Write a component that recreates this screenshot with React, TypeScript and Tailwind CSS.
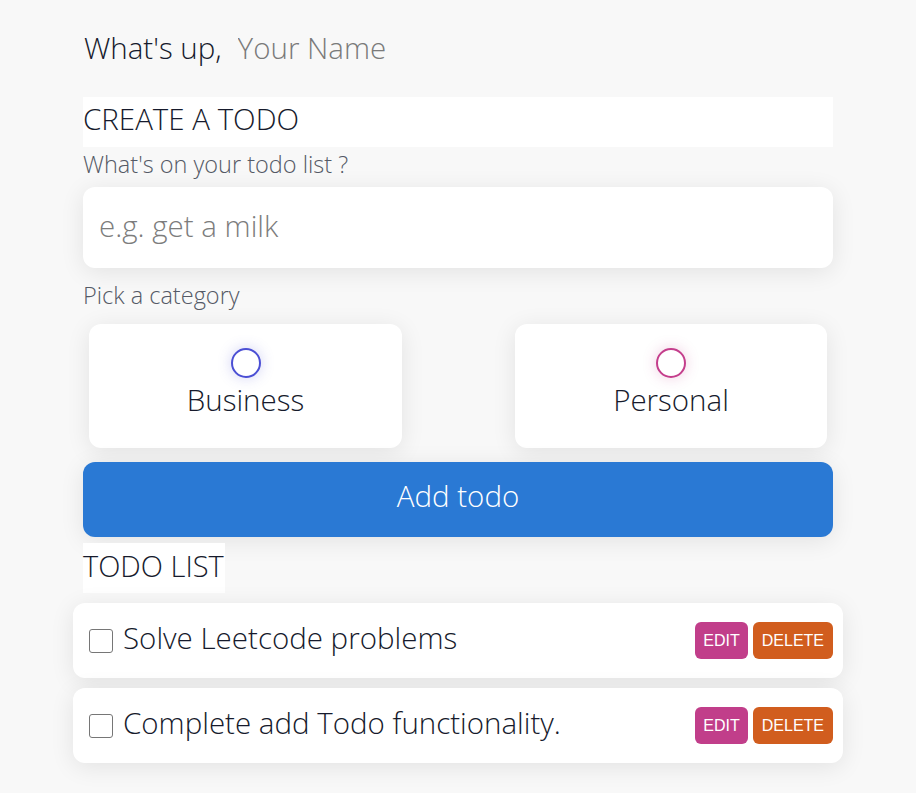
import React, { useState } from "react";

interface Todo {
  id: number;
  content: string;
  category: "business" | "personal";
  done: boolean;
}

const font = "font-['Open_Sans',sans-serif]";

const App: React.FC = () => {
  const [name, setName] = useState("");
  const [input, setInput] = useState("");
  const [category, setCategory] = useState<"business" | "personal" | "">("");
  const [todos, setTodos] = useState<Todo[]>([
    { id: 1, content: "Solve Leetcode problems", category: "business", done: false },
    { id: 2, content: "Complete add Todo functionality.", category: "personal", done: false },
  ]);

  // add new todo
  const handleAdd = () => {
    if (!input.trim() || !category) return;
    setTodos((prev) => [
      ...prev,
      { id: Date.now(), content: input, category, done: false },
    ]);
    setInput("");
    setCategory("");
  };

  const toggleDone = (id: number) => {
    setTodos((prev) =>
      prev.map((t) => (t.id === id ? { ...t, done: !t.done } : t))
    );
  };

  const removeTodo = (id: number) => {
    setTodos((prev) => prev.filter((t) => t.id !== id));
  };

  return (
    <div className={`${font} bg-[#f8f8f8] text-[#161a2c] font-light pt-[30px] pb-[30px]`}>
      <div className="w-[750px] mx-auto">
        {/* greeting */}
        <div className="flex items-center h-[40px] text-[29.5px] pb-[3px]">
          <span className="pl-[1px]">What's up,</span>
          <input
            type="text"
            value={name}
            onChange={(e) => setName(e.target.value)}
            placeholder="Your Name"
            className="ml-[16px] bg-transparent outline-none font-light placeholder:text-[#7a7a7a] text-[29.5px] w-[400px]"
          />
        </div>

        {/* create */}
        <h3 className="mt-[27px] bg-white h-[50px] flex items-center text-[29.5px] font-light leading-none pb-[6px]">
          CREATE A TODO
        </h3>
        <p className="mt-[6px] text-[23.5px] text-[#555a66] h-[25px] leading-[22px]">
          What's on your todo list ?
        </p>
        <input
          type="text"
          value={input}
          onChange={(e) => setInput(e.target.value)}
          placeholder="e.g. get a milk"
          className="mt-[9px] w-full h-[81px] bg-white rounded-[12px] px-[16px] pb-[5px] text-[29.5px] font-light outline-none placeholder:text-[#7c7c7c] shadow-[0_4px_24px_rgba(0,0,0,0.09)]"
        />
        <p className="mt-[16px] text-[23.5px] text-[#555a66] h-[25px] leading-[22px]">
          Pick a category
        </p>

        <div className="mt-[15px] flex justify-between px-[6px]">
          <label
            className="w-[313px] h-[124px] pb-[7px] bg-white rounded-[12px] flex flex-col items-center justify-center cursor-pointer shadow-[0_4px_24px_rgba(0,0,0,0.09)]"
            onClick={() => setCategory("business")}
          >
            <span
              className={`w-[30px] h-[30px] rounded-full border-2 border-[#4b4fd4] shadow-[0_0_14px_rgba(75,79,212,0.25)] ${
                category === "business" ? "bg-[#4b4fd4]" : "bg-white"
              }`}
            />
            <span className="mt-[4px] text-[29.5px] leading-[36px] font-light">
              Business
            </span>
          </label>
          <label
            className="w-[312px] h-[124px] pb-[7px] bg-white rounded-[12px] flex flex-col items-center justify-center cursor-pointer shadow-[0_4px_24px_rgba(0,0,0,0.09)]"
            onClick={() => setCategory("personal")}
          >
            <span
              className={`w-[30px] h-[30px] rounded-full border-2 border-[#c43e8c] shadow-[0_0_14px_rgba(196,62,140,0.25)] ${
                category === "personal" ? "bg-[#c43e8c]" : "bg-white"
              }`}
            />
            <span className="mt-[4px] text-[29.5px] leading-[36px] font-light">
              Personal
            </span>
          </label>
        </div>

        <button
          onClick={handleAdd}
          className="mt-[14px] w-full h-[75px] rounded-[12px] bg-[#2a79d4] text-white text-[29.5px] font-light pb-[6px] shadow-[0_4px_24px_rgba(0,0,0,0.09)]"
        >
          Add todo
        </button>

        {/* list */}
        <h3 className="mt-[6px] inline-flex items-center bg-white h-[50px] pr-[1px] text-[29px] font-light leading-none pb-[6px]">
          TODO LIST
        </h3>

        <div className="mt-[10px] -mx-[10px] flex flex-col gap-[10px]">
          {todos.map((todo) => (
            <div
              key={todo.id}
              className="h-[75px] bg-white rounded-[12px] flex items-center pl-[16px] pr-[10px] shadow-[0_4px_24px_rgba(0,0,0,0.09)]"
            >
              <input
                type="checkbox"
                checked={todo.done}
                onChange={() => toggleDone(todo.id)}
                className="appearance-none w-[24px] h-[24px] border border-[#767676] rounded-[3px] bg-white"
              />
              <span
                className={`ml-[10px] flex-1 text-[29.5px] leading-none pb-[6px] font-light ${
                  todo.done ? "line-through text-gray-400" : ""
                }`}
              >
                {todo.content}
              </span>
              <div className="flex gap-[5px] font-['Liberation_Sans',sans-serif] font-normal">
                <button className="h-[37px] px-[8px] rounded-[6px] bg-[#c13e8a] text-white text-[16px]">
                  EDIT
                </button>
                <button
                  onClick={() => removeTodo(todo.id)}
                  className="h-[37px] px-[9px] rounded-[6px] bg-[#d15d1e] text-white text-[16px]"
                >
                  DELETE
                </button>
              </div>
            </div>
          ))}
        </div>
      </div>
    </div>
  );
};

export default App;
